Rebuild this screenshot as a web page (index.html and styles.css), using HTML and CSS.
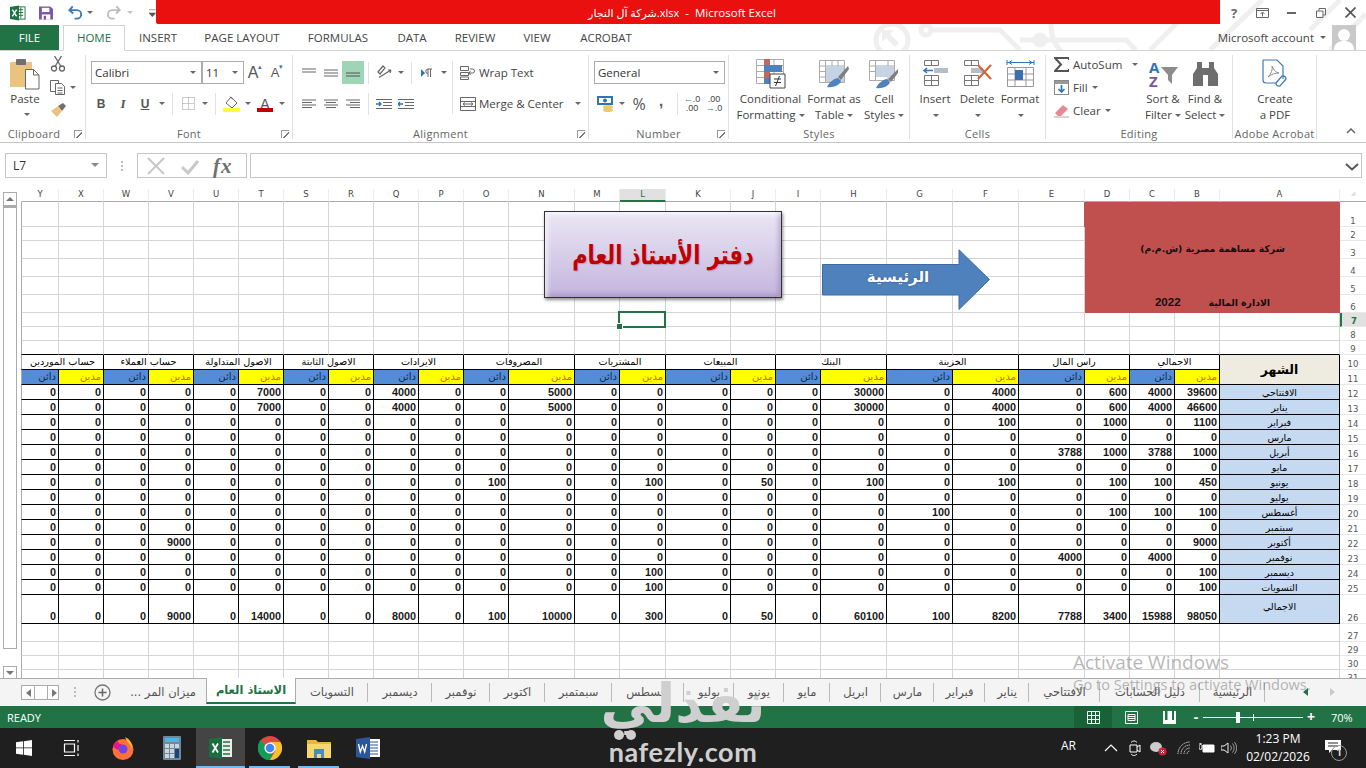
FILE: index.html
```html
<!DOCTYPE html>
<html lang="en">
<head>
<meta charset="utf-8">
<title>شركة آل النجار.xlsx - Microsoft Excel</title>
<link rel="stylesheet" href="styles.css">
</head>
<body>
<div class="app">
  <header class="top">
    <svg class="circuit" width="496" height="50" viewBox="0 0 496 50"><g fill="none" stroke="#efefef" stroke-width="5"><circle cx="22" cy="40" r="16"/><path d="M60 30H130L150 50"/><circle cx="56" cy="30" r="5"/><path d="M150 40H256l10 10"/><circle cx="170" cy="40" r="5"/><path d="M190 0a38 38 0 0 0 60 50"/><path d="M280 50 330 0"/><path d="M340 50 392 0"/><path d="M440 30 470 0"/><path d="M460 50 496 14"/></g><path d="M12 30h12l-4 4 9 9-4 4-9-9-4 4z" fill="#efefef"/></svg>
    <div class="titlebar">
      <div class="qat">
        <svg class="q-x" width="17" height="16" viewBox="0 0 17 16"><rect x="7" y="1.500" width="9" height="13" fill="#fff" stroke="#217346"/><path d="M9 4.500h5M9 7.500h5M9 10.500h5M11.500 2v12" stroke="#217346"/><path d="M0 1.500 9.500 0v16L0 14.500z" fill="#1e7145"/><path d="M2.500 4.500 7 11.500M7 4.500l-4.500 7" stroke="#fff" stroke-width="1.500"/></svg>
        <svg class="q-s" width="15" height="14" viewBox="0 0 15 14"><path d="M0 0h12l3 3v11H0z" fill="#7a56a6"/><rect x="3" y="1.500" width="8" height="4.500" fill="#fff"/><rect x="3" y="8.500" width="9" height="5.500" fill="#fff"/><rect x="5" y="10" width="2.500" height="4" fill="#7a56a6"/></svg>
        <svg class="q-u" width="15" height="15" viewBox="0 0 15 15"><path d="M5 1 1.500 5 5.500 8.500M2 5h7.500a4.500 4.500 0 0 1 0 9H7" fill="none" stroke="#3a79b8" stroke-width="2"/></svg>
        <i class="car q-c1"></i>
        <svg class="q-r" width="15" height="15" viewBox="0 0 15 15"><path d="M10 1l3.500 4-4 3.500M13 5H5.500a4.500 4.500 0 0 0 0 9H8" fill="none" stroke="#bdbdbd" stroke-width="2"/></svg>
        <i class="car q-c2"></i>
        <svg class="q-m" width="7" height="8" viewBox="0 0 7 8"><path d="M0 .5h7M0 4h7L3.500 8z" fill="#555" stroke="#555" stroke-width=".6"/></svg>
      </div>
      <div class="redbar"><span>شركة آل النجار.xlsx</span> &nbsp;-&nbsp; Microsoft Excel</div>
      <div class="winbtns">
        <span class="help">?</span>
        <svg width="13" height="10" viewBox="0 0 13 10"><path d="M.5.5h12v9H.5zM.5 2.500h12M6.500 8.500V4.500M4.500 6l2-2 2 2" fill="none" stroke="#666"/></svg>
        <svg width="9" height="3" viewBox="0 0 9 3"><rect width="9" height="2" y="1" fill="#666"/></svg>
        <svg width="10" height="10" viewBox="0 0 10 10"><path d="M.5 3h6.500v6.500H.5zM3 2.500V.5h6.500V7H7.500" fill="none" stroke="#666"/></svg>
        <svg width="11" height="11" viewBox="0 0 11 11"><path d="M.5.500l10 10M10.500.5l-10 10" stroke="#555" stroke-width="1.700"/></svg>
      </div>
    </div>
    <nav class="tabs">
      <a class="file">FILE</a>
      <a class="home">HOME</a>
      <a class="t1">INSERT</a>
      <a class="t2">PAGE LAYOUT</a>
      <a class="t3">FORMULAS</a>
      <a class="t4">DATA</a>
      <a class="t5">REVIEW</a>
      <a class="t6">VIEW</a>
      <a class="t7">ACROBAT</a>
      <div class="acct"><span>Microsoft account</span><i class="car"></i>
        <svg width="24" height="25" viewBox="0 0 24 25"><rect width="24" height="25" fill="#c9c9c9"/><circle cx="12" cy="10" r="6" fill="#fff"/><path d="M2 25c0-7 5-9 10-9s10 2 10 9z" fill="#fff"/></svg>
      </div>
    </nav>
  </header>

  <section class="ribbon">
    <div class="grp g-clip">
      <div class="tools clip">
        <div class="big paste">
          <svg width="30" height="32" viewBox="0 0 30 32"><rect x="0" y="4" width="22" height="25" rx="1" fill="#eac47f"/><rect x="6" y="1" width="10" height="6" rx="1" fill="#6f6f6f"/><path d="M15.500 11.500h8l5.500 5.500v14H15.500z" fill="#fff" stroke="#666"/><path d="M23.500 11.500v5.500H29" fill="none" stroke="#666"/></svg>
          <span>Paste</span><i class="car"></i>
        </div>
        <div class="clip-s">
          <svg width="16" height="16" viewBox="0 0 16 16"><g fill="none" stroke="#666" stroke-width="1.300"><circle cx="4" cy="12.500" r="2.500"/><circle cx="12" cy="12.500" r="2.500"/><path d="M5 10.500 11.500 0M11 10.500 4.500 0"/></g></svg>
          <div class="rw0"><svg width="16" height="15" viewBox="0 0 16 15"><g fill="#fff" stroke="#666"><path d="M.5 .5h8v11h-8z"/><path d="M5.500 3.500h6l3 3v8h-9z"/></g><path d="M7.500 8h5M7.500 10.500h5M7.500 13h5" stroke="#666"/></svg><i class="car"></i></div>
          <svg width="16" height="14" viewBox="0 0 16 14"><path d="M8 3l5-3 3 3-4 5z" fill="#6f6f6f"/><path d="M1 8l7-5 4 5-5 6z" fill="#eac47f"/></svg>
        </div>
      </div>
      <div class="glabel">Clipboard<i class="launch"></i></div>
    </div>

    <div class="grp g-font">
      <div class="tools two">
        <div class="rw">
          <div class="combo cname">Calibri<i class="car"></i></div>
          <div class="combo csize">11<i class="car"></i></div>
          <span class="b22 grow">A<sup>▴</sup></span>
          <span class="b22 shrink">A<sup>▾</sup></span>
        </div>
        <div class="rw pull1">
          <b class="b22 fb">B</b><span class="b22 fi">I</span><span class="b22 fu">U</span><i class="c12"><i class="car"></i></i>
          <i class="sep"></i>
          <span class="b22"><svg width="13" height="13" viewBox="0 0 13 13"><path d="M.5.5h12v12H.5zM6.500.5v12M.5 6.500h12" fill="none" stroke="#9a9a9a" stroke-dasharray="1 1"/></svg></span><i class="c12"><i class="car"></i></i>
          <i class="sep"></i>
          <span class="b22"><svg width="17" height="16" viewBox="0 0 17 16"><path d="M8 1l6 6-5 5-6-5z" fill="#fff" stroke="#666"/><path d="M7 .5l3 3" stroke="#666"/><rect y="12" width="17" height="4" fill="#ffff40"/></svg></span><i class="c12"><i class="car"></i></i>
          <span class="b22 fcol">A</span><i class="c12"><i class="car"></i></i>
        </div>
      </div>
      <div class="glabel">Font<i class="launch"></i></div>
    </div>

    <div class="grp g-align">
      <div class="tools align">
        <div class="two al-l">
          <div class="rw">
            <span class="b22 va"><svg width="14" height="10" viewBox="0 0 14 10"><path d="M0 1h14M0 4h14" stroke="#666"/></svg></span>
            <span class="b22"><svg width="14" height="8" viewBox="0 0 14 8"><path d="M0 1h14M0 4h14M0 7h14" stroke="#666"/></svg></span>
            <span class="b22 on"><svg width="14" height="8" viewBox="0 0 14 8"><path d="M0 4h14M0 7h14" stroke="#555"/></svg></span>
            <i class="sep"></i>
            <span class="b22"><svg width="16" height="15" viewBox="0 0 16 15"><path d="M2 7l5-6 2 2-5 6zM3 12.500 15 5M15 5l-3 0M15 5l-1 3" fill="none" stroke="#666" stroke-width="1.200"/></svg></span><i class="c12"><i class="car"></i></i>
            <i class="sep"></i>
            <span class="b22"><svg width="12" height="10" viewBox="0 0 12 10"><path d="M0 1l4 4-4 4z" fill="#2f75b5"/><path d="M7 9V1h4M9.500 9V1M7 1a2.200 2.200 0 0 0 0 4.400" fill="none" stroke="#666"/></svg></span><i class="c12"><i class="car"></i></i>
          </div>
          <div class="rw">
            <span class="b22"><svg width="14" height="10" viewBox="0 0 14 10"><path d="M0 1h14M0 3.500h10M0 6h14M0 8.500h10" stroke="#666"/></svg></span>
            <span class="b22"><svg width="14" height="10" viewBox="0 0 14 10"><path d="M0 1h14M2 3.500h10M0 6h14M2 8.500h10" stroke="#666"/></svg></span>
            <span class="b22"><svg width="14" height="10" viewBox="0 0 14 10"><path d="M0 1h14M4 3.500h10M0 6h14M4 8.500h10" stroke="#666"/></svg></span>
            <i class="sep"></i>
            <span class="b22"><svg width="16" height="10" viewBox="0 0 16 10"><path d="M0 5h4M3 3l2 2-2 2" fill="none" stroke="#2f75b5" stroke-width="1.400"/><path d="M0 .5h16M7 3.500h9M7 6.500h9M0 9.500h16" stroke="#666"/></svg></span>
            <span class="b22"><svg width="16" height="10" viewBox="0 0 16 10"><path d="M5 5H1M2 3 0 5l2 2" fill="none" stroke="#2f75b5" stroke-width="1.400"/><path d="M0 .5h16M7 3.500h9M7 6.500h9M0 9.500h16" stroke="#666"/></svg></span>
          </div>
        </div>
        <div class="two al-r">
          <div class="rw wtxt"><svg width="16" height="14" viewBox="0 0 16 14"><path d="M.5.500h8v4h-8zM.5 6.500h8v3h-8zM.5 11h8v2.500h-8zM10 3h2.500a2 2 0 0 1 0 4H9M10.500 5 9 7l1.500 2" fill="none" stroke="#666"/></svg><span>Wrap Text</span></div>
          <div class="rw wtxt"><svg width="16" height="14" viewBox="0 0 16 14"><path d="M.5.500h15v13H.5zM.5 4.500h15M.5 9.500h15M3 7h10M3 7l2-1.500M3 7l2 1.500M13 7l-2-1.500M13 7l-2 1.500" fill="none" stroke="#666"/></svg><span class="merge">Merge &amp; Center</span><i class="car"></i></div>
        </div>
      </div>
      <div class="glabel">Alignment<i class="launch"></i></div>
    </div>

    <div class="grp g-num">
      <div class="tools two">
        <div class="rw"><div class="combo cgen">General<i class="car"></i></div></div>
        <div class="rw">
          <span class="b22"><svg width="17" height="16" viewBox="0 0 17 16"><rect width="16" height="9" fill="#2f75b5"/><rect x="2" y="2" width="12" height="5" fill="#fff"/><circle cx="8" cy="4.500" r="2" fill="#2f75b5"/><ellipse cx="11" cy="11" rx="5" ry="2" fill="#e8c96b"/><ellipse cx="11" cy="14" rx="5" ry="2" fill="#e8c96b"/></svg></span><i class="c12"><i class="car"></i></i>
          <span class="b22 pct">%</span>
          <b class="b22 cma">,</b>
          <i class="sep s3"></i>
          <span class="b22 dec"><i><u>←</u>.0</i><i>.00</i></span>
          <span class="b22 dec"><i>.00</i><i><u>→</u>.0</i></span>
        </div>
      </div>
      <div class="glabel">Number<i class="launch"></i></div>
    </div>

    <div class="grp g-style">
      <div class="tools bigs">
        <div class="big w73"><svg width="30" height="30" viewBox="0 0 30 30"><path d="M.5.500h27v24H.5zM9 .5v24M18 .5v24M.5 6.500h27M.5 12.500h27M.5 18.500h27" fill="#fff" stroke="#ababab"/><path d="M8 0h6v6H8zM8 13h6v6H8z" fill="#c0675f"/><path d="M8 6h18v7H8z" fill="#4f81bd"/><path d="M8 19h6v6H8z" fill="#4f81bd"/><path d="M14 15h15v14H14z" fill="#fff" stroke="#444"/><path d="M18 20h7M18 23.500h7M19.500 27l4-10" stroke="#333"/></svg><span>Conditional<br>Formatting<i class="car"></i></span></div>
        <div class="big w54"><svg width="30" height="30" viewBox="0 0 30 30"><path d="M.5 1.500h25v22H.5zM6.500 1.500v22M13 1.500v22M19 1.500v22M.5 7h25M.5 12.500h25M.5 18h25" fill="#fff" stroke="#ababab"/><rect x="7" y="7" width="18" height="16" fill="#c6d3e4"/><path d="M29 7 19 18l3 3 8-11z" fill="#7f7f7f"/><path d="M8 28c2-5 8-9 11-9l3 3c-1 4-8 7-14 6z" fill="#4f81bd"/></svg><span>Format as<br>Table<i class="car"></i></span></div>
        <div class="big w46"><svg width="30" height="30" viewBox="0 0 30 30"><path d="M.5 1.500h25v20H.5zM.5 7h25M.5 12.500h25M6.500 1.500v20M19 1.500v20" fill="#fff" stroke="#ababab"/><rect x="7" y="7" width="18" height="11" fill="#c6d3e4"/><path d="M29 10 19 20l3 3 7-9z" fill="#7f7f7f"/><path d="M7 29c2-5 8-9 11-9l3 3c-1 4-8 7-14 6z" fill="#4f81bd"/></svg><span>Cell<br>Styles<i class="car"></i></span></div>
      </div>
      <div class="glabel">Styles</div>
    </div>

    <div class="grp g-cells">
      <div class="tools bigs">
        <div class="big w42"><svg width="27" height="30" viewBox="0 0 27 30"><path d="M2.500 1.500h14v5h-14zM9.500 1.500v5M2.500 16.500h14v10h-14zM9.500 16.500v10M2.500 21.500h14" fill="#fff" stroke="#777"/><path d="M12 9h14v5H12z" fill="#b4bfcc"/><path d="M11 11.500H2M5 9 2 11.500 5 14" fill="none" stroke="#2f75b5" stroke-width="1.500"/></svg><span>Insert<br><i class="car"></i></span></div>
        <div class="big w42"><svg width="29" height="30" viewBox="0 0 29 30"><path d="M1.500 1.500h14v5h-14zM8.500 1.500v5M1.500 16.500h14v10h-14zM8.500 16.500v10M1.500 21.500h14" fill="#fff" stroke="#777"/><rect x="8" y="9" width="12" height="5" fill="#b4bfcc"/><path d="M15 6 28 20M28 6 15 20" stroke="#d0653f" stroke-width="2.200"/></svg><span>Delete<br><i class="car"></i></span></div>
        <div class="big w44"><svg width="29" height="30" viewBox="0 0 29 30"><path d="M1 1v5M28 1v5M1 3.500h27M3 3.500l3-2M3 3.500l3 2M26 3.500l-3-2M26 3.500l-3 2" fill="none" stroke="#2f75b5"/><path d="M1.500 8.500h26v19h-26zM1.500 15h26M1.500 21h26M9 8.500v19M20 8.500v19" fill="#fff" stroke="#999"/><rect x="9" y="11" width="8" height="10" fill="#3b70b0"/></svg><span>Format<br><i class="car"></i></span></div>
      </div>
      <div class="glabel">Cells</div>
    </div>

    <div class="grp g-edit">
      <div class="tools edit">
        <div class="ecol">
          <div class="eitem"><svg width="15" height="15" viewBox="0 0 15 15"><path d="M15 3V1H1l6 6.500L1 14h14v-2" fill="none" stroke="#555" stroke-width="2"/></svg><span class="auto">AutoSum</span><i class="car"></i></div>
          <div class="eitem"><svg width="15" height="15" viewBox="0 0 15 15"><rect x=".5" y=".5" width="14" height="14" fill="#fff" stroke="#888"/><rect x="1" y="1" width="13" height="3" fill="#999"/><path d="M7.500 5v7M4.500 9l3 3 3-3" fill="none" stroke="#2f75b5" stroke-width="1.700"/></svg><span>Fill</span><i class="car"></i></div>
          <div class="eitem"><svg width="15" height="14" viewBox="0 0 15 14"><path d="M1 9 9 1l5 4-7 7H4z" fill="#e88a94"/><path d="M0 13h15" stroke="#aaa"/></svg><span>Clear</span><i class="car"></i></div>
        </div>
        <div class="big w42"><svg width="30" height="30" viewBox="0 0 30 30"><text x="1" y="14" class="az-a">A</text><text x="1" y="28" class="az-z">Z</text><path d="M13 8h17l-6 8v9l-4-4v-5z" fill="#8c8c8c"/></svg><span>Sort &amp;<br>Filter<i class="car"></i></span></div>
        <div class="big w42"><svg width="27" height="26" viewBox="0 0 27 26"><path d="M5 1h5v6h7V1h5v6l4 6v12H16V14h-5v11H1V13l4-6z" fill="#6e6e6e"/></svg><span>Find &amp;<br>Select<i class="car"></i></span></div>
      </div>
      <div class="glabel">Editing</div>
    </div>

    <div class="grp g-acro">
      <div class="tools bigs">
        <div class="big w84"><svg width="27" height="30" viewBox="0 0 27 30"><path d="M1 1h14l6 6v13M1 1v20a3 3 0 0 0 3 3h10" fill="none" stroke="#3d7ab8" stroke-width="1.200"/><path d="M6 18c3-3 5-8 4-11 2 4 3 6 7 7-4 0-7 1-11 4z" fill="none" stroke="#8a8a8a"/><path d="M14 24l6-7a3 3 0 0 1 4 3l-6 7a3 3 0 0 1-4-3z" fill="none" stroke="#3d7ab8" stroke-width="1.300"/></svg><span>Create<br>a PDF</span></div>
      </div>
      <div class="glabel">Adobe Acrobat</div>
    </div>
    <div class="collapse"><svg width="10" height="6" viewBox="0 0 10 6"><path d="M1 5l4-4 4 4" fill="none" stroke="#666" stroke-width="1.500"/></svg></div>
  </section>

  <section class="formula">
    <div class="namebox">L7<i class="car"></i></div>
    <div class="dots"><i></i><i></i><i></i></div>
    <div class="fxbox">
      <svg width="18" height="18" viewBox="0 0 18 18"><path d="M1 1l16 16M17 1 1 17" stroke="#c8c8c8" stroke-width="2"/></svg>
      <svg width="18" height="16" viewBox="0 0 18 16"><path d="M1 8l6 6L17 2" fill="none" stroke="#c8c8c8" stroke-width="3"/></svg>
      <span class="fx">fx</span>
    </div>
    <div class="finput"><svg width="14" height="8" viewBox="0 0 14 8"><path d="M1 1l6 5.500L13 1" fill="none" stroke="#555" stroke-width="2"/></svg></div>
  </section>

  <section class="sheet">
    <div class="vscroll">
      <span class="sb-btn"><i class="up"></i></span>
      <span class="sb-thumb"></span>
      <span class="sb-btn"><i class="dn"></i></span>
    </div>
    <div class="gridwrap">
      <table class="grid">
        <colgroup>
          <col class="c38"><col class="c45"><col class="c45"><col class="c45"><col class="c45"><col class="c45"><col class="c45"><col class="c45"><col class="c45"><col class="c45"><col class="c45"><col class="c66"><col class="c45"><col class="c46"><col class="c65"><col class="c45"><col class="c45"><col class="c66"><col class="c66"><col class="c66"><col class="c66"><col class="c45"><col class="c45"><col class="c45"><col class="c120"><col class="c26">
        </colgroup>
        <tr class="h13 chead"><th>Y<th>X<th>W<th>V<th>U<th>T<th>S<th>R<th>Q<th>P<th>O<th>N<th>M<th class="csel">L<th>K<th>J<th>I<th>H<th>G<th>F<th>E<th>D<th>C<th>B<th>A<th class="corner">◢</tr>
        <tr class="h25"><td><td><td><td><td><td><td><td><td><td><td><td><td><td><td><td><td><td><td><td><td><td class="brand" colspan="4" rowspan="6"><div class="brandin"><p>شركة مساهمة مصرية (ش.م.م)</p><p class="brand2"><span class="yr">2022</span><span>الادارة المالية</span></p></div><th class="rh">1</tr>
        <tr class="h14"><td><td><td><td><td><td><td><td><td><td><td><td><td><td><td><td><td><td><td><td><td><th class="rh">2</tr>
        <tr class="h18"><td><td><td><td><td><td><td><td><td><td><td><td><td><td><td><td><td><td><td><td><td><th class="rh">3</tr>
        <tr class="h18"><td><td><td><td><td><td><td><td><td><td><td><td><td><td><td><td><td><td><td><td><td><th class="rh">4</tr>
        <tr class="h18"><td><td><td><td><td><td><td><td><td><td><td><td><td><td><td><td><td><td><td><td><td><th class="rh">5</tr>
        <tr class="h18"><td><td><td><td><td><td><td><td><td><td><td><td><td><td><td><td><td><td><td><td><td><th class="rh">6</tr>
        <tr class="h14"><td><td><td><td><td> <td><td><td><td><td> <td><td><td><td><td> <td><td><td><td><td> <td><td><td><td><td> <th class="rh rsel">7</tr>
        <tr class="h14"><td><td><td><td><td> <td><td><td><td><td> <td><td><td><td><td> <td><td><td><td><td> <td><td><td><td><td> <th class="rh">8</tr>
        <tr class="h14 above"><td><td><td><td><td> <td><td><td><td><td> <td><td><td><td><td> <td><td><td><td><td> <td><td><td><td><td> <th class="rh">9</tr>
        <tr class="h15 d hd1"><td colspan="2">حساب الموردين<td colspan="2">حساب العملاء<td colspan="2">الاصول المتداولة<td colspan="2">الاصول الثابتة<td colspan="2">الايرادات<td colspan="2">المصروفات<td colspan="2">المشتريات<td colspan="2">المبيعات<td colspan="2">البنك<td colspan="2">الخزينة<td colspan="2">راس المال<td colspan="2">الاجمالي<td class="month-h" rowspan="2">الشهر<th class="rh">10</tr>
        <tr class="h15 d hd2"><td class="cr">دائن<td class="db">مدين<td class="cr">دائن<td class="db">مدين<td class="cr">دائن<td class="db">مدين<td class="cr">دائن<td class="db">مدين<td class="cr">دائن<td class="db">مدين<td class="cr">دائن<td class="db">مدين<td class="cr">دائن<td class="db">مدين<td class="cr">دائن<td class="db">مدين<td class="cr">دائن<td class="db">مدين<td class="cr">دائن<td class="db">مدين<td class="cr">دائن<td class="db">مدين<td class="cr">دائن<td class="db">مدين<th class="rh">11</tr>
        <tr class="h15 d n"><td>0<td>0<td>0<td>0<td>0<td>7000<td>0<td>0<td>4000<td>0<td>0<td>5000<td>0<td>0<td>0<td>0<td>0<td>30000<td>0<td>4000<td>0<td>600<td>4000<td>39600<td class="mo">الافتتاحي<th class="rh">12</tr>
        <tr class="h15 d n"><td>0<td>0<td>0<td>0<td>0<td>7000<td>0<td>0<td>4000<td>0<td>0<td>5000<td>0<td>0<td>0<td>0<td>0<td>30000<td>0<td>4000<td>0<td>600<td>4000<td>46600<td class="mo">يناير<th class="rh">13</tr>
        <tr class="h15 d n"><td>0<td>0<td>0<td>0<td>0<td>0<td>0<td>0<td>0<td>0<td>0<td>0<td>0<td>0<td>0<td>0<td>0<td>0<td>0<td>100<td>0<td>1000<td>0<td>1100<td class="mo">فبراير<th class="rh">14</tr>
        <tr class="h15 d n"><td>0<td>0<td>0<td>0<td>0<td>0<td>0<td>0<td>0<td>0<td>0<td>0<td>0<td>0<td>0<td>0<td>0<td>0<td>0<td>0<td>0<td>0<td>0<td>0<td class="mo">مارس<th class="rh">15</tr>
        <tr class="h15 d n"><td>0<td>0<td>0<td>0<td>0<td>0<td>0<td>0<td>0<td>0<td>0<td>0<td>0<td>0<td>0<td>0<td>0<td>0<td>0<td>0<td>3788<td>1000<td>3788<td>1000<td class="mo">أبريل<th class="rh">16</tr>
        <tr class="h15 d n"><td>0<td>0<td>0<td>0<td>0<td>0<td>0<td>0<td>0<td>0<td>0<td>0<td>0<td>0<td>0<td>0<td>0<td>0<td>0<td>0<td>0<td>0<td>0<td>0<td class="mo">مايو<th class="rh">17</tr>
        <tr class="h15 d n"><td>0<td>0<td>0<td>0<td>0<td>0<td>0<td>0<td>0<td>0<td>100<td>0<td>0<td>100<td>0<td>50<td>0<td>100<td>0<td>100<td>0<td>100<td>100<td>450<td class="mo">يونيو<th class="rh">18</tr>
        <tr class="h15 d n"><td>0<td>0<td>0<td>0<td>0<td>0<td>0<td>0<td>0<td>0<td>0<td>0<td>0<td>0<td>0<td>0<td>0<td>0<td>0<td>0<td>0<td>0<td>0<td>0<td class="mo">يوليو<th class="rh">19</tr>
        <tr class="h15 d n"><td>0<td>0<td>0<td>0<td>0<td>0<td>0<td>0<td>0<td>0<td>0<td>0<td>0<td>0<td>0<td>0<td>0<td>0<td>100<td>0<td>0<td>100<td>100<td>100<td class="mo">أغسطس<th class="rh">20</tr>
        <tr class="h15 d n"><td>0<td>0<td>0<td>0<td>0<td>0<td>0<td>0<td>0<td>0<td>0<td>0<td>0<td>0<td>0<td>0<td>0<td>0<td>0<td>0<td>0<td>0<td>0<td>0<td class="mo">سبتمبر<th class="rh">21</tr>
        <tr class="h15 d n"><td>0<td>0<td>0<td>9000<td>0<td>0<td>0<td>0<td>0<td>0<td>0<td>0<td>0<td>0<td>0<td>0<td>0<td>0<td>0<td>0<td>0<td>0<td>0<td>9000<td class="mo">أكتوبر<th class="rh">22</tr>
        <tr class="h15 d n"><td>0<td>0<td>0<td>0<td>0<td>0<td>0<td>0<td>0<td>0<td>0<td>0<td>0<td>0<td>0<td>0<td>0<td>0<td>0<td>0<td>4000<td>0<td>4000<td>0<td class="mo">نوفمبر<th class="rh">23</tr>
        <tr class="h15 d n"><td>0<td>0<td>0<td>0<td>0<td>0<td>0<td>0<td>0<td>0<td>0<td>0<td>0<td>100<td>0<td>0<td>0<td>0<td>0<td>0<td>0<td>0<td>0<td>100<td class="mo">ديسمبر<th class="rh">24</tr>
        <tr class="h15 d n"><td>0<td>0<td>0<td>0<td>0<td>0<td>0<td>0<td>0<td>0<td>0<td>0<td>0<td>100<td>0<td>0<td>0<td>0<td>0<td>0<td>0<td>0<td>0<td>100<td class="mo">التسويات<th class="rh">25</tr>
        <tr class="h29 d n"><td>0<td>0<td>0<td>9000<td>0<td>14000<td>0<td>0<td>8000<td>0<td>100<td>10000<td>0<td>300<td>0<td>50<td>0<td>60100<td>100<td>8200<td>7788<td>3400<td>15988<td>98050<td class="mo">الاجمالي<th class="rh">26</tr>
        <tr class="h18"><td><td><td><td><td> <td><td><td><td><td> <td><td><td><td><td> <td><td><td><td><td> <td><td><td><td><td> <th class="rh">27</tr>
        <tr class="h14"><td><td><td><td><td> <td><td><td><td><td> <td><td><td><td><td> <td><td><td><td><td> <td><td><td><td><td> <th class="rh">29</tr>
        <tr class="h14"><td><td><td><td><td> <td><td><td><td><td> <td><td><td><td><td> <td><td><td><td><td> <td><td><td><td><td> <th class="rh">30</tr>
        <tr class="h14"><td><td><td><td><td> <td><td><td><td><td> <td><td><td><td><td> <td><td><td><td><td> <td><td><td><td><td> <th class="rh">31</tr>
      </table>
    </div>
    <div class="titlebox"><span>دفتر الأستاذ العام</span></div>
    <div class="arrow"><svg width="169" height="62" viewBox="0 0 169 62"><path d="M.5 15.500H137V.8L167.500 30.500 137 60.500V46H.5z" fill="#4f81bd" stroke="#3f6b9f"/></svg><span>الرئيسية</span></div>
    <div class="cursor"><i></i></div>
  </section>

  <section class="sheettabs">
    <div class="tnav"><i class="al"></i><i class="ar"></i></div>
    <div class="dots tdots"><i></i><i></i><i></i></div>
    <svg class="plus" width="17" height="17" viewBox="0 0 17 17"><circle cx="8.500" cy="8.500" r="7.500" fill="none" stroke="#777" stroke-width="1.300"/><path d="M8.500 4.500v8M4.500 8.500h8" stroke="#666" stroke-width="1.500"/></svg>
    <div class="stabs">
      <span class="nosep">... ميزان المر</span>
      <span class="active">الاستاذ العام</span>
      <span>التسويات</span><span>ديسمبر</span><span>نوفمبر</span><span>اكتوبر</span><span>سبمتمبر</span><span>اغسطس</span><span>يوليو</span><span>يونيو</span><span>مايو</span><span>ابريل</span><span>مارس</span><span>فبراير</span><span>يناير</span><span>الافتتاحي</span><span>دليل الحسابات</span><span>الرئيسية</span>
    </div>
    <div class="tright"><i class="al2"></i><i class="ar2"></i></div>
  </section>

  <footer class="status">
    <span class="ready">READY</span>
    <div class="views">
      <span class="vb cur"><svg width="13" height="13" viewBox="0 0 13 13"><path d="M.5.5h12v12H.5zM.5 4.500h12M.5 8.500h12M4.500.5v12M8.500.5v12" fill="none" stroke="#fff"/></svg></span>
      <span class="vb"><svg width="13" height="13" viewBox="0 0 13 13"><path d="M.5.5h12v12H.5zM3 3.500h7v6H3zM3 5.500h7M3 7.500h7" fill="none" stroke="#fff"/></svg></span>
      <span class="vb"><svg width="13" height="13" viewBox="0 0 13 13"><rect width="13" height="13" fill="#fff"/><path d="M6.500 0v9M2 0v9h2.500V0M9 0v9h2V0" fill="#217346"/></svg></span>
    </div>
    <div class="zoom">
      <span class="zm">-</span>
      <div class="slider"><i class="tick"></i><i class="thumb"></i></div>
      <span class="zp">+</span>
      <span class="zpct">70%</span>
    </div>
  </footer>

  <footer class="taskbar">
    <div class="win"><svg width="16" height="16" viewBox="0 0 16 16"><path d="M0 2.300 7 1.300V7.500H0zM7.800 1.200 16 0V7.500H7.800zM0 8.300H7V14.700L0 13.700zM7.800 8.300H16V16L7.800 14.800z" fill="#fff"/></svg></div>
    <div class="tv"><svg width="17" height="16" viewBox="0 0 17 16"><path d="M1 .5h11M1 15.500h11M1.500 4h10v8h-10zM15 0v2.500M15 5v6M15 13.500V16" fill="none" stroke="#fff" stroke-width="1.200"/></svg></div>
    <div class="ti"><svg width="24" height="24" viewBox="0 0 24 24"><circle cx="12" cy="13.500" r="10.500" fill="#ff7139"/><path d="M14 1c5 2 8 7 7 13 0-3-2-6-4-7z" fill="#ffbd2e"/><path d="M2 10c1-3 3-4 5-5 0 2 1 3 3 3l3 2c-3 0-5 2-6 4-2-1-4-2-5-4z" fill="#e31587"/><circle cx="12" cy="13" r="4.500" fill="#7542e5"/></svg></div>
    <div class="ti"><svg width="18" height="24" viewBox="0 0 18 24"><rect width="18" height="24" rx="1" fill="#738799"/><rect x="2" y="2" width="14" height="4" fill="#49b8e8"/><g fill="#c9d6e0"><rect x="2" y="8" width="4" height="4"/><rect x="7" y="8" width="4" height="4"/><rect x="12" y="8" width="4" height="4"/><rect x="2" y="13" width="4" height="4"/><rect x="7" y="13" width="4" height="4"/><rect x="2" y="18" width="4" height="4"/><rect x="7" y="18" width="4" height="4"/></g><rect x="12" y="13" width="4" height="9" fill="#17457a"/></svg></div>
    <div class="ti act"><svg width="24" height="22" viewBox="0 0 24 22"><path d="M11 2h12v18H11z" fill="#fff" opacity=".9"/><path d="M14 5h7M14 9h7M14 13h7M14 17h7" stroke="#217346" stroke-width="1.500"/><path d="M0 2 13 0v22L0 20z" fill="#1b6e42"/><path d="M3.500 6.500 9 15.500M9 6.500 3.500 15.500" stroke="#fff" stroke-width="1.800"/></svg></div>
    <div class="ti run"><svg width="24" height="24" viewBox="0 0 24 24"><circle cx="12" cy="12" r="12" fill="#dd4b3e"/><path d="M12 12 1.600 18A12 12 0 0 1 3 3.500L7 10z" fill="#109d58"/><path d="M12 24A12 12 0 0 1 1.600 18L7 12h10z" fill="#109d58"/><path d="M12 6h10.400A12 12 0 0 1 12 24l5.200-9z" fill="#fbc02d"/><circle cx="12" cy="12" r="5.600" fill="#fff"/><circle cx="12" cy="12" r="4.300" fill="#4285f4"/></svg></div>
    <div class="ti run"><svg width="24" height="20" viewBox="0 0 24 20"><path d="M0 2h9l2 2h13v15H0z" fill="#e6b93e"/><path d="M0 6h24v14H0z" fill="#f7d774"/><path d="M7 11h10v9h-3v-4h-4v4H7z" fill="#4a8bc2"/></svg></div>
    <div class="ti"><svg width="24" height="22" viewBox="0 0 24 22"><path d="M11 2h13v18H11z" fill="#fff"/><path d="M14 5h8M14 8h8M14 11h8M14 14h8M14 17h8" stroke="#2b579a"/><path d="M0 2 14 0v22L0 20z" fill="#2b579a"/><path d="M2.500 7l1.800 8 2.200-6 2.200 6 1.800-8" fill="none" stroke="#fff" stroke-width="1.300"/></svg></div>
    <div class="tray">
      <span class="lang">AR</span>
      <svg width="14" height="8" viewBox="0 0 14 8"><path d="M1 7l6-6 6 6" fill="none" stroke="#fff" stroke-width="1.200"/></svg>
      <svg width="12" height="16" viewBox="0 0 12 16"><path d="M1 5h7v7H1zM8 7l3-2v7l-3-2M2 2.500c2-2 4-2 6 0M2 14c2 2 4 2 6 0" fill="none" stroke="#fff"/></svg>
      <svg class="tr-cloud" width="17" height="15" viewBox="0 0 17 15"><ellipse cx="6" cy="6" rx="6" ry="5" fill="#ccc"/><circle cx="12.500" cy="10.500" r="4" fill="#d1233a"/><path d="M11 9l3 3M14 9l-3 3" stroke="#fff"/></svg>
      <svg width="14" height="14" viewBox="0 0 14 14"><path d="M1 13a12 12 0 0 1 12-12M4 13a9 9 0 0 1 9-9M7 13a6 6 0 0 1 6-6M10 13a3 3 0 0 1 3-3" fill="none" stroke="#ccc" stroke-dasharray="1.500 .6"/></svg>
      <svg width="16" height="10" viewBox="0 0 16 10"><path d="M4 2h11v7H4z" fill="#fff" stroke="#fff"/><path d="M0 2v3a1.500 1.500 0 0 0 3 0V2M1 0v2M2 0v2" fill="none" stroke="#fff"/></svg>
      <svg width="16" height="12" viewBox="0 0 16 12"><path d="M0 4h3l4-3v10L3 8H0z" fill="none" stroke="#eee"/><path d="M9.500 3.500a4 4 0 0 1 0 5M11.500 1.500a7 7 0 0 1 0 9M13.500 0a10 10 0 0 1 0 12" fill="none" stroke="#999"/></svg>
      <div class="clock"><span>1:23 PM</span><span>02/02/2026</span></div>
      <div class="notif"><svg width="16" height="14" viewBox="0 0 16 14"><path d="M0 0h16v10H7L4 13v-3H0z" fill="#fff"/><path d="M3 3h10M3 6h10" stroke="#222"/></svg><b>1</b></div>
    </div>
  </footer>

  <div class="activate"><p>Activate Windows</p><p>Go to Settings to activate Windows.</p></div>
  <div class="wmark"><p class="wm-ar">نفذلي</p><p class="wm-en"><i class="wd"></i><i class="wd"></i><span>nafezly.com</span></p></div>
</div>
</body>
</html>
```

FILE: styles.css
```css
*{box-sizing:border-box}
html,body{margin:0;padding:0;height:100%;overflow:hidden;background:#fff}
body{font-family:"Open Sans","DejaVu Sans",sans-serif;color:#444;font-size:11.500px}
p{margin:0}
i{font-style:normal}
.app{position:relative;width:1366px;height:768px;display:flex;flex-direction:column;overflow:hidden}
.car{display:inline-block;width:0;height:0;border-left:3px solid transparent;border-right:3px solid transparent;border-top:3px solid #666;vertical-align:middle}

/* header */
.top{position:relative;height:50px;flex:none}
.circuit{position:absolute;left:870px;top:0}
.titlebar{position:relative;display:flex;height:25px}
.qat{width:156px;position:relative;display:flex;align-items:center;flex:none}
.q-x{margin:0 0 0 10px}
.q-s{margin-left:13px}
.q-u{margin-left:15px}
.q-c1{margin-left:5px}
.q-r{margin-left:14px}
.q-c2{margin-left:6px;border-top-color:#c4c4c4}
.q-m{margin-left:16px}
.redbar{flex:1;height:24px;background:#ea1010;color:#fff;text-align:center;line-height:25px;font-size:11.500px;border-bottom-left-radius:2px;padding-right:12px;font-family:"Open Sans","DejaVu Sans",sans-serif}
.redbar span{font-size:11px}
.winbtns{width:146px;display:flex;align-items:center;gap:0;position:relative;flex:none}
.winbtns>*{flex:none}
.help{width:28px;text-align:center;font-weight:700;font-size:13px;color:#666;margin-left:0}
.winbtns svg:nth-of-type(1){margin-left:8px}
.winbtns svg:nth-of-type(2){margin-left:18px}
.winbtns svg:nth-of-type(3){margin-left:20px}
.winbtns svg:nth-of-type(4){margin-left:19px}

.tabs{position:relative;display:flex;height:25px;font-size:11.500px}
.tabs a{display:block;text-align:center;line-height:25px;color:#444}
.tabs .file{width:59px;background:#217346;color:#fff}
.tabs .home{width:62px;margin-left:4px;background:#fff;color:#217346;border:1px solid #d2d2d2;border-bottom:1px solid #fff;height:26px;position:relative;z-index:1;line-height:24px}
.t1{width:66px}.t2{width:102px}.t3{width:90px}.t4{width:58px}.t5{width:68px}.t6{width:56px}.t7{width:82px}
.acct{position:absolute;right:10px;top:0;height:25px;display:flex;align-items:center;color:#444}
.acct span{margin-right:6px}
.acct svg{margin-left:6px}

/* ribbon */
.ribbon{flex:none;height:93px;display:flex;border-top:1px solid #d2d2d2;border-bottom:1px solid #c6c6c6;background:#fff;padding-top:4px;position:relative}
.grp{display:flex;flex-direction:column;height:84px;border-right:1px solid #e1e1e1;flex:none;position:relative}
.g-clip{width:86px}.g-font{width:207px}.g-align{width:296px}.g-num{width:140px}.g-style{width:181px}.g-cells{width:136px}.g-edit{width:187px}.g-acro{width:84px}
.tools{height:73px;flex:none}
.glabel{height:11px;line-height:11px;text-align:center;font-size:11px;color:#666;letter-spacing:.3px;position:relative}
.g-clip .glabel{padding-right:17px}
.launch{position:absolute;right:3px;top:2px;width:8px;height:8px;border-left:1px solid #999;border-top:1px solid #999;background:linear-gradient(135deg,transparent 55%,#777 55%,#777 68%,transparent 68%)}
.big{display:flex;flex-direction:column;align-items:center;text-align:center;line-height:16px;flex:none;color:#444}
.big svg{margin-top:3px;height:32px;flex:none}
.big>span{display:block;margin-top:1px;white-space:nowrap}
.big .car{margin-left:3px}
.bigs{display:flex;padding-left:0}
.w73{width:73px}.w54{width:54px}.w46{width:46px}.w42{width:42px}.w44{width:44px}.w84{width:84px}
.g-style .bigs{padding-left:5px}
.g-cells .bigs{padding-left:4px}

.clip{display:flex}
.paste{width:50px}
.paste svg{height:32px;margin-top:3px}
.paste .car{margin-top:6px}
.paste span{margin-top:1px}
.clip-s{display:flex;flex-direction:column;gap:8px;padding-top:1px;align-items:flex-start}
.clip-s>svg{margin-top:0}
.rw0{display:flex;align-items:center;gap:4px}

.two{display:flex;flex-direction:column;gap:8px;padding:6px 0 0 5px}
.rw{display:flex;align-items:center;height:23px}
.pull1{margin-left:-1px}
.combo{height:23px;border:1px solid #ababab;padding-left:3px;line-height:21px;position:relative;color:#333;font-family:"Open Sans",sans-serif;font-size:11.500px}
.combo .car{position:absolute;right:5px;top:9px}
.cname{width:111px}
.csize{width:42px;margin-left:0}
.cgen{width:131px}
.b22{width:22px;height:23px;display:flex;align-items:center;justify-content:center;flex:none;color:#555}
.c12{width:12px;display:flex;justify-content:center;flex:none}
.sep{display:block;width:1px;height:22px;background:#e1e1e1;margin:0 4px;flex:none}
.s3{margin:0 3px 0 5px}
.grow,.shrink{font-family:"Liberation Sans",sans-serif;color:#555}
.grow{font-size:16px}
.shrink{font-size:13px}
.grow sup,.shrink sup{font-size:7px;line-height:0;color:#2f75b5;align-self:flex-start;margin-top:6px}
.fb{font-family:"Liberation Sans",sans-serif;font-size:12px;font-weight:700}
.fi{font-family:"Liberation Serif",serif;font-style:italic;font-size:13px;font-weight:700}
.fu{font-family:"Liberation Sans",sans-serif;font-weight:700;font-size:12px;text-decoration:underline}
.fcol{font-family:"Liberation Sans",sans-serif;font-size:14px;line-height:14px;display:flex;border-bottom:0;position:relative}
.fcol::after{content:"";position:absolute;left:3px;right:3px;bottom:3px;height:4px;background:#c00000}
.on{background:#9fd5b7}
.align{display:flex}
.al-l{width:160px;border-right:0;flex:none;position:relative}
.al-l::after{content:"";position:absolute;right:0;top:6px;height:53px;width:1px;background:#e1e1e1}
.al-r{padding-left:7px;width:135px}
.wtxt{color:#444;white-space:nowrap}
.wtxt span{margin-left:3px}
.merge{margin-right:11px}
.pct{font-size:16px;color:#555}
.cma{font-size:15px;font-family:"Liberation Sans",sans-serif;padding-bottom:6px}
.dec{flex-direction:column;font-size:9px;line-height:9px;font-family:"Liberation Sans",sans-serif;color:#444}
.dec u{text-decoration:none;color:#2f75b5;font-weight:700}
.edit{display:flex;padding-left:8px}
.ecol{width:88px;display:flex;flex-direction:column;flex:none;margin-top:-2px}
.eitem{height:23px;display:flex;align-items:center;gap:4px;white-space:nowrap;color:#444}
.eitem svg{flex:none}
.auto{margin-right:6px}
.az-a{font:700 15px "Open Sans",sans-serif;fill:#2f75b5}
.az-z{font:700 15px "Open Sans",sans-serif;fill:#7a56a6}
.collapse{position:absolute;right:10px;bottom:5px}

/* formula bar */
.formula{flex:none;display:flex;height:26px;margin-top:10px;align-items:stretch;padding-left:5px;background:#fff}
.namebox{width:102px;height:25px;border:1px solid #c6c6c6;padding-left:7px;line-height:23px;color:#333;position:relative;font-size:12px}
.namebox .car{position:absolute;right:7px;top:9px;border-left-width:4px;border-right-width:4px;border-top-width:4px;border-top-color:#888}
.dots{display:flex;flex-direction:column;gap:2px;justify-content:center;width:30px;align-items:center;height:25px;flex:none}
.dots i{display:block;width:2px;height:2px;background:#bbb}
.fxbox{width:110px;height:25px;border:1px solid #c6c6c6;display:flex;align-items:center;padding-left:9px;flex:none}
.fxbox svg:nth-child(2){margin-left:16px;margin-top:2px}
.fx{font:italic 700 21px "Liberation Serif",serif;color:#707070;margin-left:14px;line-height:20px;letter-spacing:1px}
.finput{width:1112px;margin-left:3px;height:25px;border:1px solid #c6c6c6;position:relative;flex:none}
.finput svg{position:absolute;right:2px;top:9px}

/* sheet */
.sheet{flex:none;height:489px;margin-top:10px;position:relative;display:flex;overflow:hidden;background:#fff}
.vscroll{width:21px;flex:none;padding:3px 0 0 3px;display:flex;flex-direction:column}
.sb-btn{width:14px;height:14px;border:1px solid #ababab;display:flex;align-items:center;justify-content:center;flex:none}
.sb-btn i{width:0;height:0;border-left:4px solid transparent;border-right:4px solid transparent}
.up{border-bottom:4px solid #777}
.dn{border-top:4px solid #777}
.sb-thumb{width:14px;height:443px;border:1px solid #ababab;border-top:2px solid #ababab;flex:none;margin-bottom:17px;background:#fff}
.gridwrap{width:1345px;flex:none;overflow:hidden}
.grid{table-layout:fixed;width:1345px;border-collapse:separate;border-spacing:0;font-family:"Liberation Sans","DejaVu Sans",sans-serif}
.c26{width:26px}.c38{width:38px}.c45{width:45px}.c46{width:46px}.c65{width:65px}.c66{width:66px}.c120{width:120px}
.grid td,.grid th{padding:0;border-right:1px solid #d4d4d4;border-bottom:1px solid #d4d4d4;line-height:1;overflow:hidden;white-space:nowrap;font-size:9px}
.grid tr>:first-child{border-left:1px solid #ababab}
.h13>*{height:13px}.h14>*{height:14px}.h15>*{height:15px}.h18>*{height:18px}.h25>*{height:25px}.h29>*{height:29px}
.chead th{font-weight:400;color:#444;font-size:9px;border-bottom:1px solid #ababab;border-right:1px solid #ececec;text-align:center;vertical-align:top;padding-top:1px;font-family:"DejaVu Sans",sans-serif;font-size:8.500px}
.chead th:first-child{border-left-color:#fff}
.chead .csel{background:#e1e1e1;color:#217346;border-bottom:2px solid #217346}
.chead .corner{color:#dcdcdc;font-size:6px;border-left:0;border-right:0}
.rh{font-weight:400!important;color:#555;text-align:center;vertical-align:bottom;font-family:"DejaVu Sans",sans-serif;border-right:0!important;border-left:0;border-bottom:1px solid #e8e8e8!important;font-size:8.500px!important;padding-bottom:1px!important}
.rsel{background:#e1e1e1;color:#217346;border-left:2px solid #217346!important;font-weight:700!important}
.above td{border-bottom-color:#000}
.d td{border-right-color:#000;border-bottom-color:#000;text-align:right;color:#111;vertical-align:middle}
.n td{font-weight:700;font-size:10.800px;padding-right:2px;color:#1a1a1a}
.h29.n td{vertical-align:bottom;padding-bottom:1px}
.hd1 td{text-align:center;font-weight:400;font-size:9.700px;font-family:"DejaVu Sans",sans-serif;color:#000}
.hd2 td{font-size:10px;font-family:"DejaVu Sans",sans-serif;padding-right:2px}
.db{background:#ffff00;color:#d9680a!important}
.cr{background:#538dd5;color:#13294b!important}
.grid .month-h{background:#eeece1;text-align:center;font:700 12.500px "DejaVu Sans",sans-serif}
.grid .n .mo{background:#c5d9f1;text-align:center;font:400 9.500px "DejaVu Sans",sans-serif;padding-right:0;color:#000}
.grid .h29.n .mo{vertical-align:middle;padding-bottom:5px}
.grid .brand{background:#c0504d;border-right:0;border-bottom:0;vertical-align:top;padding:41px 0 0;color:#111;box-shadow:-1px 0 0 #c0504d}
.brandin{display:flex;flex-direction:column;align-items:center;gap:42px;font:700 9.300px "DejaVu Sans",sans-serif}
.brand2{display:flex;align-items:center;gap:28px}
.yr{font:700 11.500px "Liberation Sans",sans-serif}

.titlebox{position:absolute;left:544px;top:22px;width:238px;height:87px;border:1px solid #333;background:linear-gradient(180deg,#eae6f3 0%,#d9d1ea 45%,#c3b4dd 100%);box-shadow:inset 6px 6px 4px -3px rgba(255,255,255,.6),inset -6px -6px 4px -3px rgba(120,100,160,.35),1px 2px 3px rgba(0,0,0,.45);display:flex;align-items:center;justify-content:center}
.titlebox span{color:#c00000;font:700 21px "DejaVu Sans",sans-serif;text-shadow:1px 1px 1px rgba(90,60,120,.3);display:block;transform:scaleY(1.25)}
.arrow{position:absolute;left:822px;top:60px;width:169px;height:62px}
.arrow svg{display:block}
.arrow span{position:absolute;left:0;width:152px;top:19px;text-align:center;color:#fff;font:700 15px "DejaVu Sans",sans-serif;text-shadow:0 0 2px rgba(30,50,90,.5)}
.cursor{position:absolute;left:618px;top:122px;width:48px;height:17px;border:2px solid #217346}
.cursor i{position:absolute;left:-3px;bottom:-3px;width:5px;height:5px;background:#217346;border:0;outline:1px solid #fff}

/* sheet tabs */
.sheettabs{flex:none;height:28px;background:#f4f4f4;border-top:1px solid #ababab;display:flex;position:relative;align-items:flex-start;margin-top:0}
.tnav{margin:6px 0 0 21px;width:38px;height:15px;border:1px solid #ababab;display:flex;flex:none;background:#fff}
.tnav i{width:13px;position:relative;flex:none}
.tnav .al{border-right:1px solid #ababab}
.tnav .al::before,.tnav .ar::before{content:"";position:absolute;top:3px;left:4px;border-top:4px solid transparent;border-bottom:4px solid transparent}
.tnav .al::before{border-right:5px solid #777}
.tnav .ar{margin-left:12px;border-left:1px solid #ababab;width:12px}
.tnav .ar::before{border-left:5px solid #777}
.tdots{width:16px;height:20px;margin:3px 0 0 8px}
.plus{margin:5px 0 0 11px;flex:none}
.stabs{position:absolute;left:120px;top:0;display:grid;grid-template-columns:86px 90px 72px 64px 58px 55px 67px 72px 50px 50px 46px 51px 53px 51px 44px 71px 100px 65px;height:27px}
.stabs span{display:flex;align-items:center;justify-content:center;white-space:nowrap;font:400 11.500px "DejaVu Sans",sans-serif;color:#555;position:relative;height:25px;overflow:hidden}
.stabs span::after{content:"";position:absolute;right:0;top:4px;height:19px;width:1px;background:#bbb}
.stabs span.nosep::after{display:none}
.stabs .active{background:#fff;color:#217346;font-weight:700;border-left:1px solid #ababab;border-right:1px solid #ababab;margin-top:-1px;height:26px;border-bottom:2px solid #217346;overflow:visible}
.stabs .active::after{display:none}
.tright{position:absolute;left:1303px;top:9px;display:flex;gap:22px}
.tright i{display:block;border-top:4px solid transparent;border-bottom:4px solid transparent}
.al2{border-right:5px solid #217346}
.ar2{border-left:5px solid #c8c8c8}

/* status */
.status{flex:none;height:22px;background:#217346;color:#fff;display:flex;align-items:center;font-size:11px;position:relative}
.ready{margin-left:7px;flex:none;width:34px}
.views{display:flex;margin-left:1033px;height:22px;flex:none}
.vb{width:38px;display:flex;align-items:center;justify-content:center;flex:none}
.vb.cur{background:#196237}
.zoom{display:flex;align-items:center;flex:none;margin-left:2px}
.zm,.zp{font-weight:700;font-size:14px;width:12px;text-align:center;line-height:14px;flex:none}
.slider{width:100px;height:1px;background:#fff;position:relative;margin:0 2px 0 1px;flex:none}
.tick{position:absolute;left:50px;top:-3px;width:1px;height:7px;background:#fff}
.thumb{position:absolute;left:33px;top:-5px;width:4px;height:11px;background:#fff}
.zpct{margin-left:14px;font-size:11px;flex:none}

/* taskbar */
.taskbar{flex:none;height:40px;background:#1f1f1f;display:flex;align-items:center;color:#fff}
.win{width:48px;display:flex;justify-content:center;flex:none}
.tv{width:50px;padding-right:3px;display:flex;justify-content:center;flex:none}
.ti{width:49px;height:40px;display:flex;align-items:center;justify-content:center;flex:none;position:relative}
.act{background:#444}
.act::after,.run::after{content:"";position:absolute;bottom:0;height:2px;background:#76b9ed}
.act::after{left:0;right:0}
.run::after{left:4px;right:4px}
.tray{margin-left:auto;display:flex;align-items:center;position:relative;width:320px;height:40px}
.tray>svg{flex:none}
.lang{font-size:12px;color:#fff;margin-left:15px;width:21px;margin-top:-6px;flex:none}
.tray>svg:nth-of-type(1){margin-left:22px}
.tray>svg:nth-of-type(2){margin-left:11px}
.tray>svg:nth-of-type(3){margin-left:9px}
.tray>svg:nth-of-type(4){margin-left:10px}
.tray>svg:nth-of-type(5){margin-left:8px}
.tray>svg:nth-of-type(6){margin-left:6px}
.clock{display:flex;flex-direction:column;align-items:center;width:70px;margin-left:6px;font-size:12px;line-height:18px;color:#fff;flex:none}
.notif{position:relative;margin-left:12px;width:16px;height:14px;margin-top:-2px;flex:none}
.notif svg{display:block}
.notif b{position:absolute;left:6px;top:5px;width:16px;height:16px;border:1.500px solid #999;border-radius:50%;font:700 10px/13px "Open Sans",sans-serif;text-align:center;color:#ddd}

/* overlays */
.activate{position:absolute;left:1073px;top:649px;color:rgba(110,110,110,.5);pointer-events:none;font-family:"Open Sans",sans-serif}
.activate p:first-child{font-size:19px;line-height:26px}
.activate p:last-child{font-size:14.500px;line-height:20px;margin-top:0;white-space:nowrap}
.wmark{position:absolute;left:583px;top:670px;width:200px;text-align:center;color:#cfcfcf;pointer-events:none}
.wm-ar{font:700 54px/68px "DejaVu Sans",sans-serif}
.wm-en{position:relative;font:700 27px/28px "Lato",sans-serif;margin-top:0;letter-spacing:.6px}
.wm-en span{display:block}
.wd{position:absolute;top:-8px;left:31px;width:10px;height:10px;border-radius:50%;background:#cfcfcf}
.wd+.wd{left:43px}
```
